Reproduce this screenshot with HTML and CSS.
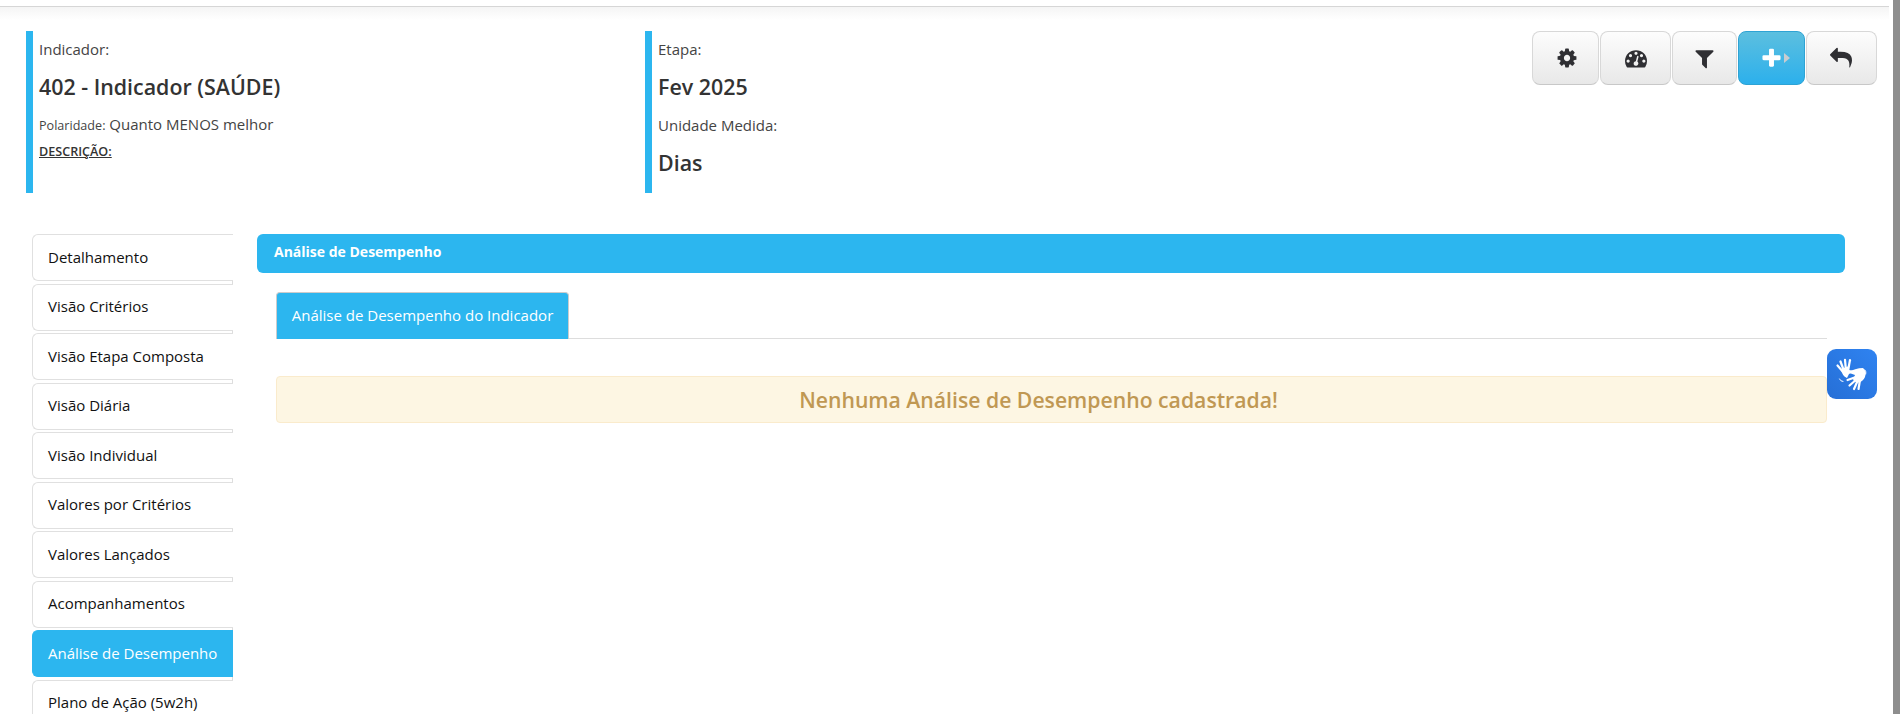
FILE: index.html
```html
<!DOCTYPE html>
<html lang="pt-BR">
<head>
<meta charset="utf-8">
<title>Análise de Desempenho</title>
<link rel="stylesheet" href="styles.css">
</head>
<body>
<div class="app">
  <div class="page">
    <header class="topbar"></header>
    <section class="info-row">
      <div class="info-block">
        <div class="label">Indicador:</div>
        <div class="value">402 - Indicador (SAÚDE)</div>
        <div class="polarity"><span class="polarity-label">Polaridade:</span> Quanto MENOS melhor</div>
        <div class="desc">DESCRIÇÃO:</div>
      </div>
      <div class="info-block">
        <div class="label">Etapa:</div>
        <div class="value">Fev 2025</div>
        <div class="label label-next">Unidade Medida:</div>
        <div class="value">Dias</div>
      </div>
      <div class="toolbar">
        <button class="tool-btn w-cog"><svg class="ico-22" viewBox="0 0 1792 1792"><path d="M1152 896q0-106-75-181t-181-75-181 75-75 181 75 181 181 75 181-75 75-181zm512-109v222q0 12-8 23t-20 13l-185 28q-19 54-39 91 35 50 107 138 10 12 10 25t-9 23q-27 37-99 108t-94 71q-12 0-26-9l-138-108q-44 23-91 38-16 136-29 186-7 28-36 28h-222q-14 0-24.5-8.5t-11.5-21.5l-28-184q-49-16-90-37l-141 107q-10 9-25 9-14 0-25-11-126-114-165-168-7-10-7-23 0-12 8-23 15-21 51-66.5t54-70.5q-27-50-41-99l-183-27q-13-2-21-12.5t-8-23.5v-222q0-12 8-23t19-13l186-28q14-46 39-92-40-57-107-138-10-12-10-24 0-10 9-23 26-36 98.5-107.5t94.5-71.5q13 0 26 10l138 107q44-23 91-38 16-136 29-186 7-28 36-28h222q14 0 24.5 8.5t11.5 21.5l28 184q49 16 90 37l142-107q9-9 24-9 13 0 25 10 129 119 165 170 7 8 7 22 0 12-8 23-15 21-51 66.5t-54 70.5q26 50 41 98l183 28q13 2 21 12.5t8 23.5z"/></svg></button>
        <button class="tool-btn w-dash"><svg class="ico-22" viewBox="0 0 1792 1792"><path d="M384 1152q0-53-37.5-90.5t-90.5-37.5-90.5 37.5-37.5 90.5 37.5 90.5 90.5 37.5 90.5-37.5 37.5-90.5zm192-448q0-53-37.5-90.5t-90.5-37.5-90.5 37.5-37.5 90.5 37.5 90.5 90.5 37.5 90.5-37.5 37.5-90.5zm428 481l101-382q6-26-7.5-48.5t-38.5-29.5-48 6.5-30 39.5l-101 382q-60 5-107 43.5t-63 98.5q-20 77 20 146t117 89 146-20 89-117q16-60-6-117t-72-91zm660-33q0-53-37.5-90.5t-90.5-37.5-90.5 37.5-37.5 90.5 37.5 90.5 90.5 37.5 90.5-37.5 37.5-90.5zm-640-640q0-53-37.5-90.5t-90.5-37.5-90.5 37.5-37.5 90.5 37.5 90.5 90.5 37.5 90.5-37.5 37.5-90.5zm448 192q0-53-37.5-90.5t-90.5-37.5-90.5 37.5-37.5 90.5 37.5 90.5 90.5 37.5 90.5-37.5 37.5-90.5zm320 448q0 261-141 483-19 29-54 29h-1402q-35 0-54-29-141-221-141-483 0-182 71-348t191-286 286-191 348-71 348 71 286 191 191 286 71 348z"/></svg></button>
        <button class="tool-btn w-filter"><svg class="ico-23" viewBox="0 0 1792 1792"><path d="M1595 295q17 41-14 70l-493 493v742q0 42-39 59-13 5-25 5-27 0-45-19l-256-256q-19-19-19-45v-486l-493-493q-31-29-14-70 17-39 59-39h1280q42 0 59 39z"/></svg></button>
        <button class="tool-btn tool-btn-primary w-plus"><svg class="ico-23" viewBox="0 0 1792 1792"><path d="M1600 736v192q0 40-28 68t-68 28h-416v416q0 40-28 68t-68 28h-192q-40 0-68-28t-28-68v-416h-416q-40 0-68-28t-28-68v-192q0-40 28-68t68-28h416v-416q0-40 28-68t68-28h192q40 0 68 28t28 68v416h416q40 0 68 28t28 68z"/></svg><span class="caret"></span></button>
        <button class="tool-btn w-reply"><svg class="ico-22" viewBox="0 0 1792 1792"><path d="M1792 1120q0 166-127 451-3 7-10.5 24t-13.5 30-13 22q-12 17-28 17-15 0-23.5-10t-8.5-25q0-9 2.5-26.5t2.5-23.5q5-68 5-123 0-101-17.5-181t-48.5-138.5-80-101-105.5-69.5-133-42.5-154-21.5-175.5-6h-224v256q0 26-19 45t-45 19-45-19l-512-512q-19-19-19-45t19-45l512-512q19-19 45-19t45 19 19 45v256h224q713 0 875 403 53 134 53 333z"/></svg></button>
      </div>
    </section>
    <div class="content">
      <nav class="sidebar">
        <a class="side-item">Detalhamento</a>
        <a class="side-item">Visão Critérios</a>
        <a class="side-item">Visão Etapa Composta</a>
        <a class="side-item">Visão Diária</a>
        <a class="side-item">Visão Individual</a>
        <a class="side-item">Valores por Critérios</a>
        <a class="side-item">Valores Lançados</a>
        <a class="side-item">Acompanhamentos</a>
        <a class="side-item side-item-active">Análise de Desempenho</a>
        <a class="side-item">Plano de Ação (5w2h)</a>
      </nav>
      <main class="panel">
        <div class="panel-head">Análise de Desempenho</div>
        <div class="panel-body">
          <div class="tabs"><a class="tab">Análise de Desempenho do Indicador</a></div>
          <div class="alert">Nenhuma Análise de Desempenho cadastrada!</div>
        </div>
      </main>
    </div>
  </div>
  <div class="scrollbar"></div>
  <div class="vlibras">
    <svg viewBox="0 0 50 50" class="vlibras-ico" fill="none" stroke="#fff" stroke-linecap="round">
      <g stroke-width="2.2">
        <path d="M17 24 L10.5 16.5"/>
        <path d="M17 22 L13.5 12.5"/>
        <path d="M19 22 L18 10.8"/>
        <path d="M21 22 L23 11"/>
      </g>
      <path d="M14 20 Q15 27 20 29 L22 25 L28 22 L22 21 Q21 19 22 17 Z" fill="#fff" stroke="none"/>
      <g stroke-width="2.2">
        <path d="M29 28 L20.5 31"/>
        <path d="M30 30 L22.5 36.5"/>
        <path d="M31 31 L27 40"/>
        <path d="M33 31 L31.5 40"/>
      </g>
      <path d="M21 23.5 Q28 19 36 19 Q40 22 38 28 Q36 33 30 34 L26 31 L28 26 Z" fill="#fff" stroke="none"/>
      <path d="M12.5 30 Q13.5 32.5 16 32.5" stroke-width="1"/>
      <path d="M38 21 Q39.5 22.5 38.8 25" stroke-width="1"/>
    </svg>
  </div>
</div>
</body>
</html>
```
FILE: styles.css
```css
* { box-sizing: border-box; }
html, body { margin: 0; padding: 0; height: 100%; overflow: hidden; background: #fff; }
body { font-family: "Open Sans", "Noto Sans", sans-serif; font-size: 15px; color: #333; }

.app { display: flex; height: 714px; position: relative; overflow: hidden; }
.page { width: 1889px; flex: none; }
.scrollbar { width: 7px; margin-left: 4px; flex: none; background: #8e8e8e; }

.topbar { height: 31px; border-top: 6px solid #fff; background: linear-gradient(#f4f4f4, #fff 14px); box-shadow: inset 0 1px 0 #d6d6d6; }

.info-row { display: flex; padding: 0 12px 0 26px; height: 203px; }
.info-block { width: 619px; height: 162px; flex: none; border-left: 7px solid #2cb6ef; padding: 0 0 0 6px; color: #333; }
.label { font-size: 15px; line-height: 20px; padding-top: 8px; color: #444; }
.label-next { padding-top: 14px; }
.value { font-size: 21.4px; font-weight: 600; line-height: 28px; margin-top: 14px; color: #333; }
.polarity { font-size: 15px; line-height: 20px; margin-top: 13px; color: #444; }
.polarity-label { font-size: 12.6px; }
.desc { font-size: 12.6px; font-weight: 600; line-height: 16px; margin-top: 8px; text-decoration: underline; color: #333; }

.toolbar { margin-left: auto; display: flex; gap: 1px; height: 54px; }
.tool-btn { height: 54px; padding: 0; display: flex; align-items: center; justify-content: center; border: 1px solid #d8d8d8; border-bottom-color: #c8c8c8; border-radius: 8px; background: linear-gradient(#fdfdfd, #e8e8e8); fill: #2f2f33; }
.tool-btn-primary { border-color: #2ea3d4; background: linear-gradient(#5cbfdf, #2cb0ec); fill: #fff; gap: 1px; padding-left: 7px; }
.w-cog { width: 67px; padding-left: 2px; }
.w-dash { width: 71px; }
.w-filter { width: 65px; }
.w-plus { width: 67px; }
.w-reply { width: 71px; padding-right: 2px; }
.ico-22 { width: 22px; height: 22px; display: block; }
.ico-23 { width: 23px; height: 23px; display: block; }
.caret { width: 0; height: 0; border-left: 6px solid #c9ccd0; border-top: 5.5px solid transparent; border-bottom: 5.5px solid transparent; }

.content { display: flex; padding-left: 32px; }
.sidebar { width: 201px; flex: none; height: 500px; border-right: 1px solid #ddd; display: flex; flex-direction: column; gap: 2.5px; }
.side-item { height: 47px; flex: none; display: flex; align-items: center; padding: 0 0 2px 15px; margin-right: -1px; border: 1px solid #e0e0e0; border-right: none; border-radius: 6px 0 0 6px; background: #fff; color: #111; font-size: 15px; }
.side-item-active { background: #2cb6ef; border-color: #2cb6ef; color: #fff; }

.panel { width: 1588px; margin-left: 24px; }
.panel-head { height: 39px; line-height: 36px; padding-left: 17px; background: #2cb6ef; color: #fff; font-weight: 700; font-size: 14px; border-radius: 6px; }
.panel-body { padding: 19px 18px 0 19px; }
.tabs { display: flex; height: 47px; border-bottom: 1px solid #ddd; }
.tab { height: 47px; width: 293px; display: flex; align-items: center; justify-content: center; padding-bottom: 2px; background: #2cb6ef; color: #fff; font-size: 15px; border: 1px solid #ccc; border-bottom: none; border-radius: 4px 4px 0 0; }
.alert { margin-top: 37px; height: 47px; display: flex; align-items: center; justify-content: center; padding-right: 26px; background: #fdf6e3; border: 1px solid #faebcc; border-radius: 4px; color: #c09853; font-size: 21.2px; font-weight: 600; }

.vlibras { position: absolute; left: 1827px; top: 349px; width: 50px; height: 50px; border-radius: 9px; background: linear-gradient(45deg, #266fd6, #2f83f1); }
.vlibras-ico { width: 50px; height: 50px; display: block; }
```
